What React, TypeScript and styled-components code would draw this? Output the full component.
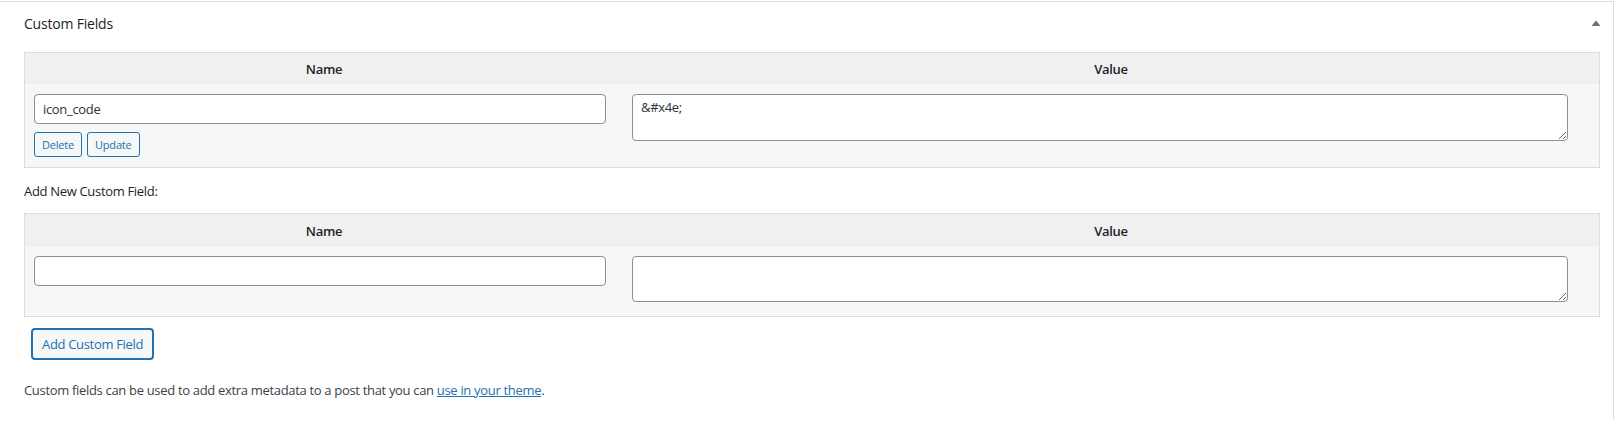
import React from "react";
import styled, { createGlobalStyle } from "styled-components";

const Global = createGlobalStyle`
  html, body { margin: 0; padding: 0; background: #fff; }
  body {
    font-family: "Open Sans", "Noto Sans", sans-serif;
    font-size: 13px;
    letter-spacing: -0.32px;
    color: #3c434a;
  }
  * { box-sizing: border-box; }
`;

const Postbox = styled.section`
  width: 1614px;
  margin-top: 1px;
  border-top: 1px solid #dcdcde;
  border-right: 1px solid #dcdcde;
  background: #fff;
`;

const Header = styled.div`
  height: 44px;
  display: flex;
  align-items: center;
  justify-content: space-between;
  padding: 0 7px 0 24px;
`;

const Title = styled.h2`
  margin: 0;
  font-size: 14px;
  font-weight: 500;
  line-height: 1.4;
  letter-spacing: -0.2px;
  color: #1e1e1e;
`;

const Toggle = styled.button`
  width: 20px;
  height: 20px;
  border: 0;
  padding: 0;
  background: transparent;
  display: flex;
  align-items: center;
  justify-content: center;
  margin-top: -3px;
`;

const Inside = styled.div`
  padding: 6px 13px 20px 24px;
`;

const MetaTable = styled.div`
  border: 1px solid #dcdcde;
  background: #f6f7f7;
`;

const HeadRow = styled.div<{ $h: number }>`
  display: grid;
  grid-template-columns: 598px 1fr;
  height: ${(p) => p.$h}px;
  background: #f0f0f0;
  align-items: center;
`;

const Th = styled.div`
  text-align: center;
  font-weight: 600;
  font-size: 13px;
  color: #1d2327;
`;

const BodyRow = styled.div<{ $pt: number; $pb: number }>`
  display: grid;
  grid-template-columns: 598px 1fr;
  padding: ${(p) => p.$pt}px 0 ${(p) => p.$pb}px;
  align-items: start;
`;

const Cell = styled.div`
  padding-left: 9px;
  display: flex;
  flex-direction: column;
  align-items: flex-start;
`;

const TextInput = styled.input`
  width: 572px;
  height: 30px;
  border: 1px solid #8c8f94;
  border-radius: 4px;
  padding: 0 8px;
  font-family: inherit;
  font-size: 13px;
  letter-spacing: -0.32px;
  color: #2c3338;
  background: #fff;
  outline: none;
`;

const TextArea = styled.textarea<{ $h: number }>`
  display: block;
  width: 936px;
  height: ${(p) => p.$h}px;
  border: 1px solid #8c8f94;
  border-radius: 4px;
  padding: 3px 8px;
  font-family: inherit;
  font-size: 13px;
  letter-spacing: -0.32px;
  line-height: 1.4;
  color: #2c3338;
  background: #fff;
  outline: none;
  resize: vertical;
`;

const ButtonRow = styled.div`
  display: flex;
  gap: 5px;
  margin-top: 8px;
`;

const SmallButton = styled.button`
  height: 25px;
  padding: 0 7px;
  border: 1px solid #2271b1;
  border-radius: 3px;
  background: #f6f7f7;
  color: #2271b1;
  font-family: inherit;
  font-size: 11px;
  letter-spacing: -0.2px;
  line-height: 23px;
`;

const Label = styled.p`
  margin: 14px 0 13px;
  line-height: 18px;
  font-weight: 500;
  color: #1d2327;
`;

const AddButton = styled.button`
  margin: 11px 0 0 7px;
  height: 32px;
  padding: 0 9px;
  border: 2px solid #2271b1;
  border-radius: 4px;
  background: #f6f7f7;
  color: #2271b1;
  font-family: inherit;
  font-size: 13px;
  letter-spacing: -0.32px;
`;

const Note = styled.p`
  margin: 21px 0 0;
  line-height: 18px;
  color: #3c434a;
`;

const Link = styled.a`
  color: #2271b1;
  text-decoration: underline;
`;

export default function App() {
  return (
    <>
      <Global />
      <Postbox>
        <Header>
          <Title>Custom Fields</Title>
          <Toggle aria-label="Toggle panel">
            <svg width="10" height="6" viewBox="0 0 10 6">
              <polygon points="0.5,6 9.5,6 5,0.5" fill="#6d7074" />
            </svg>
          </Toggle>
        </Header>
        <Inside>
          <MetaTable>
            <HeadRow $h={31}>
              <Th>Name</Th>
              <Th>Value</Th>
            </HeadRow>
            <BodyRow $pt={10} $pb={10}>
              <Cell>
                <TextInput defaultValue="icon_code" />
                <ButtonRow>
                  <SmallButton>Delete</SmallButton>
                  <SmallButton>Update</SmallButton>
                </ButtonRow>
              </Cell>
              <Cell>
                <TextArea $h={47} defaultValue={"&#x4e;"} />
              </Cell>
            </BodyRow>
          </MetaTable>
          <Label>Add New Custom Field:</Label>
          <MetaTable>
            <HeadRow $h={33}>
              <Th>Name</Th>
              <Th>Value</Th>
            </HeadRow>
            <BodyRow $pt={9} $pb={14}>
              <Cell>
                <TextInput />
              </Cell>
              <Cell>
                <TextArea $h={46} />
              </Cell>
            </BodyRow>
          </MetaTable>
          <AddButton>Add Custom Field</AddButton>
          <Note>
            Custom fields can be used to add extra metadata to a post that you can{" "}
            <Link href="#">use in your theme</Link>.
          </Note>
        </Inside>
      </Postbox>
    </>
  );
}
